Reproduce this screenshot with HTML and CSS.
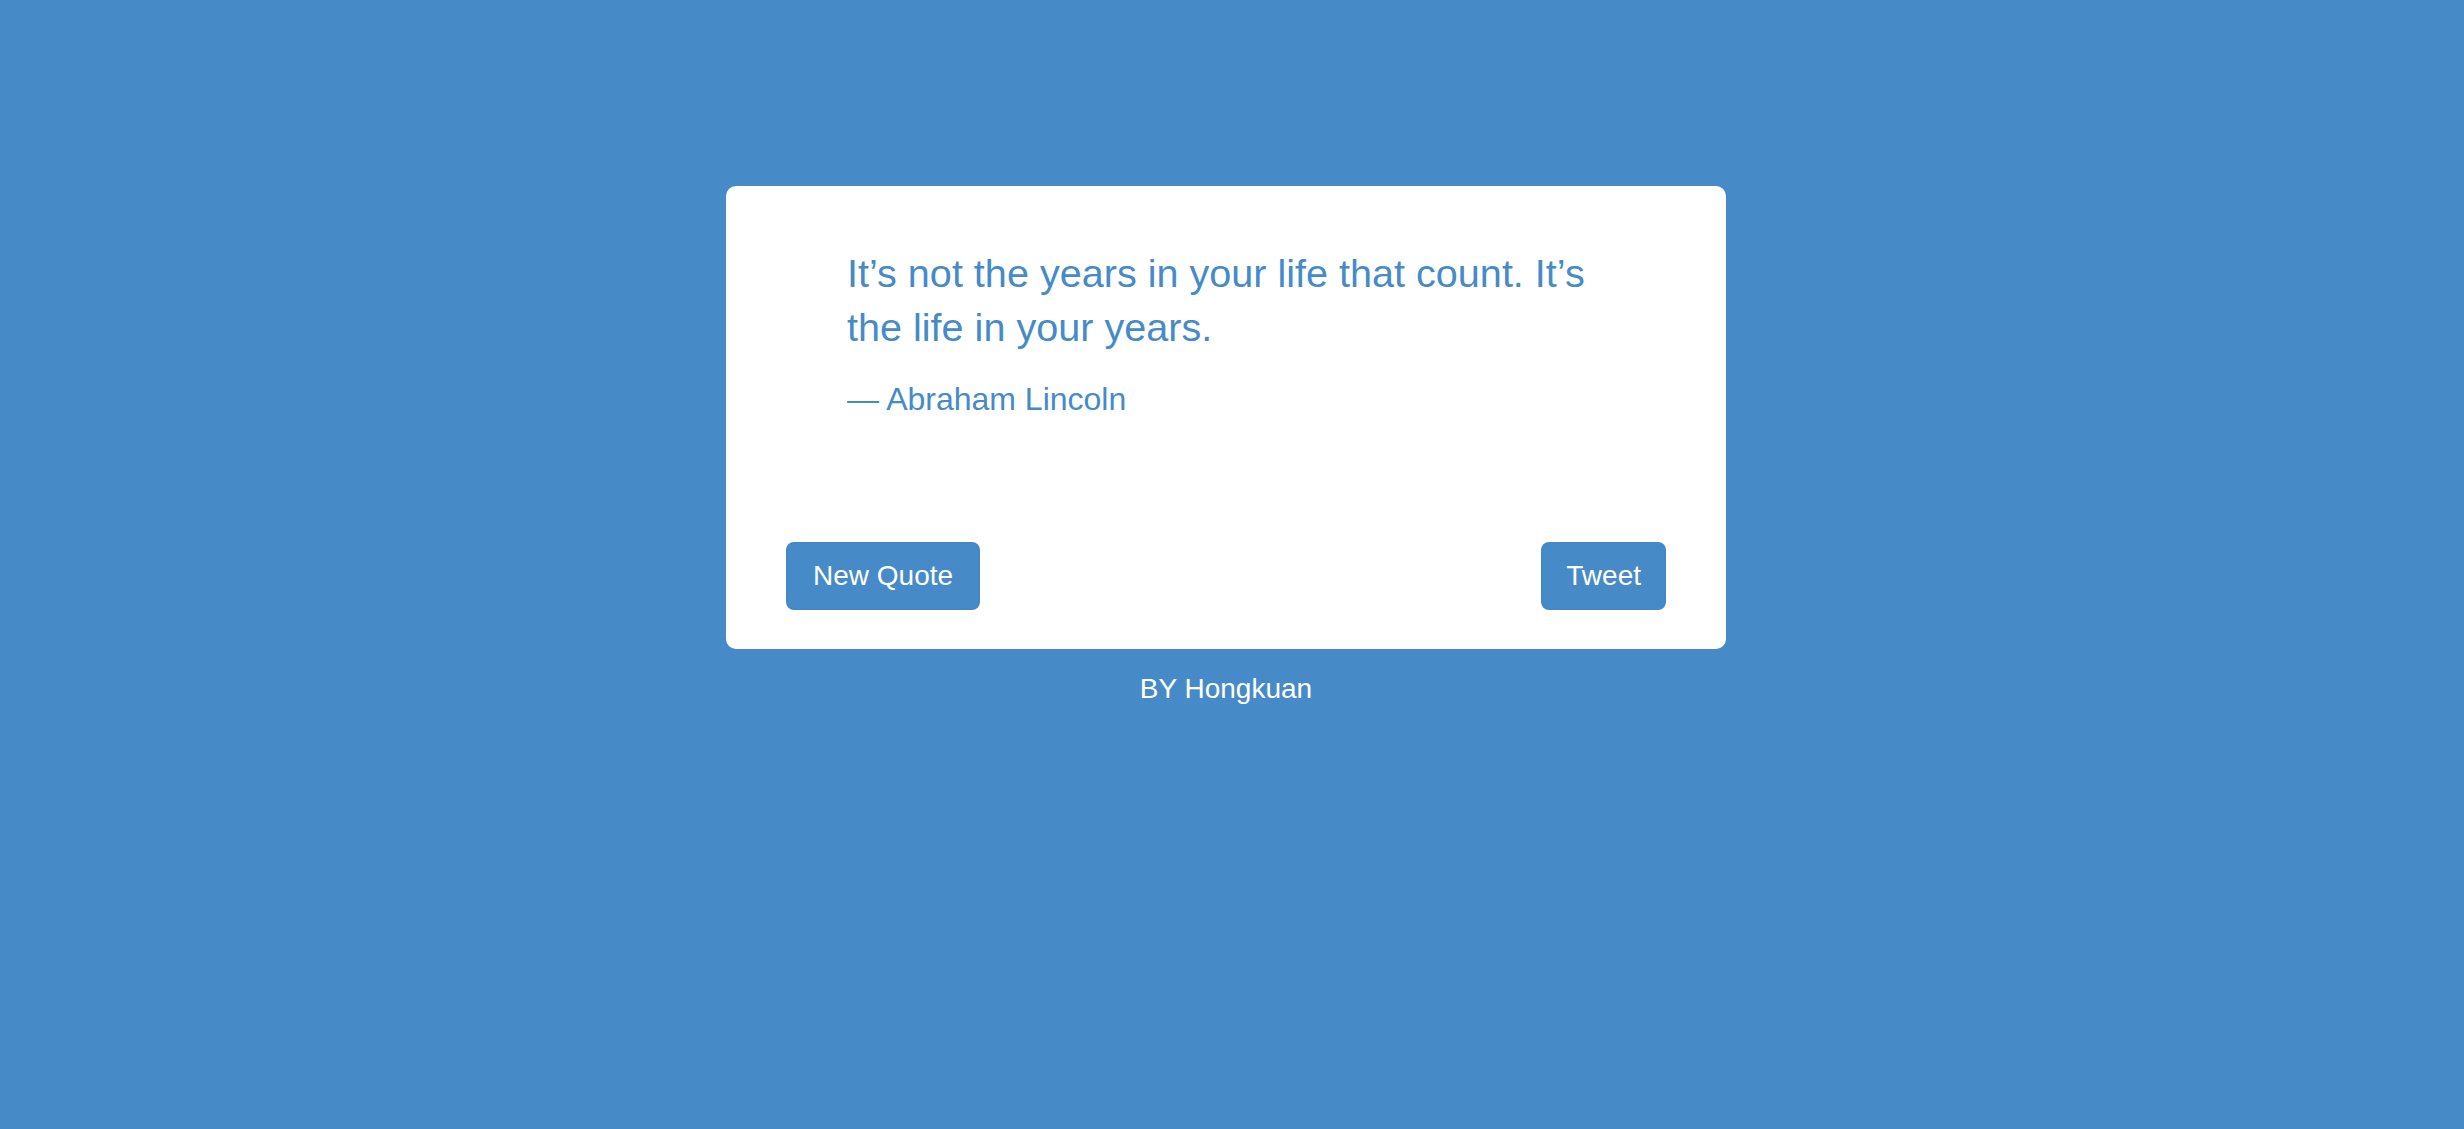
FILE: index.html
```html
<!DOCTYPE html>
<html>
<head>
<meta charset="utf-8">
<link rel="stylesheet" href="styles.css">
</head>
<body>
<div class="page">
  <div class="card">
    <div class="quote">
      <p class="quote-text">It’s not the years in your life that count. It’s the life in your years.</p>
      <p class="quote-author">— Abraham Lincoln</p>
    </div>
    <div class="actions">
      <button class="btn btn-wide">New Quote</button>
      <button class="btn">Tweet</button>
    </div>
  </div>
  <div class="footer">BY Hongkuan</div>
</div>
</body>
</html>
```
FILE: styles.css
```css
html, body {
  margin: 0;
  padding: 0;
  height: 100%;
}
body {
  background: #468bc8;
  font-family: "Liberation Sans", Arial, Helvetica, sans-serif;
  overflow: hidden;
}
.page {
  width: 2452px;
  display: flex;
  flex-direction: column;
  align-items: center;
  padding-top: 186px;
}
.card {
  box-sizing: border-box;
  width: 1000px;
  height: 463px;
  background: #fff;
  border-radius: 10px;
  padding: 60px 60px 39px;
  display: flex;
  flex-direction: column;
}
.quote {
  padding: 0 61px;
  color: #468bc8;
}
.quote-text {
  margin: 0;
  font-size: 39.6px;
  line-height: 54px;
}
.quote-author {
  margin: 22px 0 0;
  font-size: 32px;
  line-height: 46px;
}
.actions {
  margin-top: auto;
  display: flex;
  justify-content: space-between;
}
.btn {
  font-family: "Liberation Sans", Arial, Helvetica, sans-serif;
  font-size: 28px;
  line-height: 40px;
  padding: 12px 23px;
  border: 2px solid #4488c5;
  border-radius: 8px;
  background: #468bc8;
  color: #fff;
}
.btn-wide {
  padding: 12px 25px;
}
.footer {
  margin-top: 20px;
  color: #fff;
  font-size: 28px;
  line-height: 40px;
}
```
